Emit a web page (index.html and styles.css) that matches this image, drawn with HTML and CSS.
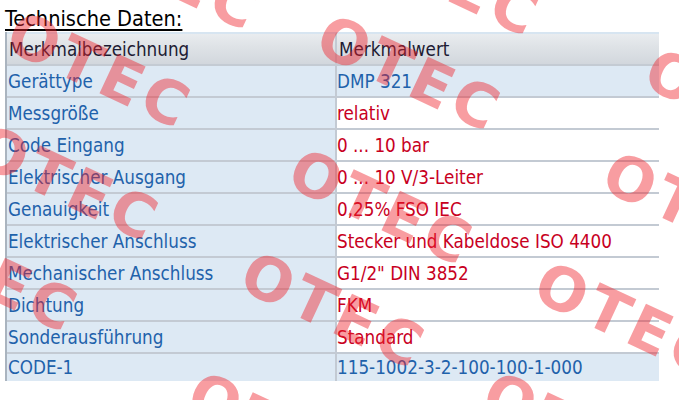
FILE: index.html
```html
<!DOCTYPE html>
<html lang="de">
<head>
    <meta charset="UTF-8">
    <title>Technische Daten</title>
    <link rel="stylesheet" href="styles.css">
</head>
<body>
    <div class="page">
        <div class="title">Technische Daten:</div>

        <table class="spec-table">
            <thead>
                <tr>
                    <th>Merkmalbezeichnung</th>
                    <th>Merkmalwert</th>
                </tr>
            </thead>
            <tbody>
                <tr class="row-blue"><td>Gerättype</td><td>DMP 321</td></tr>
                <tr><td>Messgröße</td><td>relativ</td></tr>
                <tr><td>Code Eingang</td><td>0 ... 10 bar</td></tr>
                <tr><td>Elektrischer Ausgang</td><td>0 ... 10 V/3-Leiter</td></tr>
                <tr><td>Genauigkeit</td><td>0,25% FSO IEC</td></tr>
                <tr><td>Elektrischer Anschluss</td><td>Stecker und Kabeldose ISO 4400</td></tr>
                <tr><td>Mechanischer Anschluss</td><td>G1/2" DIN 3852</td></tr>
                <tr><td>Dichtung</td><td>FKM</td></tr>
                <tr><td>Sonderausführung</td><td>Standard</td></tr>
                <tr class="row-blue row-last"><td>CODE-1</td><td>115-1002-3-2-100-100-1-000</td></tr>
            </tbody>
        </table>

        <!-- Wasserzeichen -->
        <div class="watermark">
            <span class="wm wm-a">OTEC</span>
            <span class="wm wm-b">OTEC</span>
            <span class="wm wm-c">OTEC</span>
            <span class="wm wm-d">OTEC</span>
            <span class="wm wm-e">OTEC</span>
            <span class="wm wm-f">OTEC</span>
            <span class="wm wm-g">OTEC</span>
            <span class="wm wm-h">OTEC</span>
            <span class="wm wm-i">OTEC</span>
            <span class="wm wm-j">OTEC</span>
            <span class="wm wm-k">OTEC</span>
            <span class="wm wm-l">OTEC</span>
            <span class="wm wm-m">OTEC</span>
        </div>
    </div>
</body>
</html>
```

FILE: styles.css
```css
body {
    margin: 0;
    padding: 0;
    background-color: #fff;
    font-family: "DejaVu Sans Condensed", "DejaVu Sans", sans-serif;
}
.page {
    position: relative;
    width: 679px;
    height: 400px;
    overflow: hidden;
}
.title {
    margin-left: 5px;
    padding-top: 7px;
    height: 25px;
    font-size: 21.6px;
    line-height: 24px;
    color: #000;
    text-decoration: underline;
    text-decoration-thickness: 2px;
    text-underline-offset: 3px;
    display: inline-block;
}
.spec-table {
    margin-left: 5px;
    width: 654px;
    border-collapse: separate;
    border-spacing: 0;
    border-left: 2px solid #aab4bf;
    font-size: 18.7px;
}
.spec-table th {
    height: 30px;
    padding: 0 0 0 2px;
    text-align: left;
    font-weight: normal;
    color: #1d1b33;
    border-top: 2px solid #d7e5f1;
    border-bottom: 2px solid #c4cbd3;
    background: linear-gradient(#e9ecef, #dfe3e7 40%, #d2d7dd);
}
.spec-table td {
    height: 30px;
    padding: 0;
    border-bottom: 2px solid #c3cad3;
    color: #c8001e;
    background-color: #fff;
}
.spec-table th:first-child,
.spec-table td:first-child {
    width: 326px;
    border-right: 2px solid #c3cad3;
}
.spec-table td:first-child {
    padding-left: 1px;
    color: #1f62ab;
    background-color: #dde9f4;
}
.spec-table .row-blue td {
    color: #1f62ab;
    background-color: #dde9f4;
}
.spec-table .row-last td {
    height: 27px;
    border-bottom: none;
}

.watermark {
    position: absolute;
    left: 0;
    top: 0;
    width: 679px;
    height: 400px;
    pointer-events: none;
}
.wm {
    position: absolute;
    font-family: "DejaVu Sans", sans-serif;
    font-weight: bold;
    font-size: 60px;
    line-height: 60px;
    letter-spacing: 5px;
    white-space: nowrap;
    color: rgba(238, 32, 42, 0.44);
    transform: rotate(25deg);
    transform-origin: 0 50%;
}
.wm-a { left: 11px; top: -1px; }
.wm-b { left: 321px; top: 2px; }
.wm-c { left: 649px; top: 36px; }
.wm-d { left: -21px; top: 112px; }
.wm-e { left: 293px; top: 136px; }
.wm-f { left: 607px; top: 139px; }
.wm-g { left: -102px; top: 203px; }
.wm-h { left: 245px; top: 239px; }
.wm-i { left: 539px; top: 249px; }
.wm-j { left: 80px; top: -99px; }
.wm-k { left: 360px; top: -93px; }
.wm-l { left: 192px; top: 359px; }
.wm-m { left: 487px; top: 359px; }
```
